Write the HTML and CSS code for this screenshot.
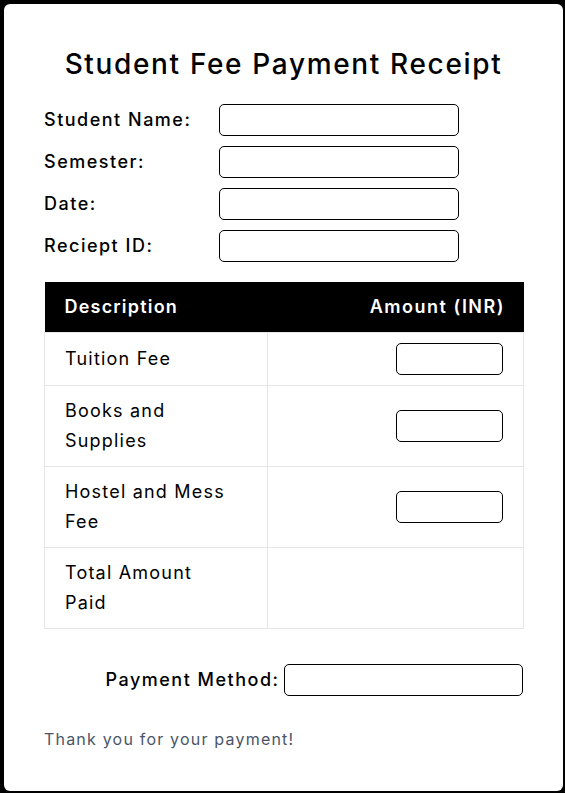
FILE: index.html
```html
<!DOCTYPE html>
<html lang="en">
<head>
<meta charset="utf-8">
<title>Student Fee Payment Receipt</title>
<link rel="stylesheet" href="styles.css">
</head>
<body>
<div class="receipt">
  <h1 class="title">Student Fee Payment Receipt</h1>
  <div class="fields">
    <label class="field-label">Student Name:</label>
    <input class="box field-input" type="text">
    <label class="field-label">Semester:</label>
    <input class="box field-input" type="text">
    <label class="field-label">Date:</label>
    <input class="box field-input" type="text">
    <label class="field-label">Reciept ID:</label>
    <input class="box field-input" type="text">
  </div>
  <table class="fees">
    <colgroup><col class="col-desc"><col class="col-amt"></colgroup>
    <thead>
      <tr><th class="th-desc">Description</th><th class="th-amt"><span class="th-amt-text">Amount (INR)</span></th></tr>
    </thead>
    <tbody>
      <tr><td class="desc">Tuition Fee</td><td class="amt"><input class="box amt-input" type="text"></td></tr>
      <tr><td class="desc">Books and Supplies</td><td class="amt"><input class="box amt-input" type="text"></td></tr>
      <tr><td class="desc">Hostel and Mess Fee</td><td class="amt"><input class="box amt-input" type="text"></td></tr>
      <tr><td class="desc">Total Amount Paid</td><td class="amt"></td></tr>
    </tbody>
  </table>
  <div class="payment">
    <label class="pay-label">Payment Method:</label>
    <input class="box pay-input" type="text">
  </div>
  <p class="thanks">Thank you for your payment!</p>
</div>
</body>
</html>
```

FILE: styles.css
```css
html, body {
  margin: 0;
  background: #000;
}
body {
  padding: 4px 2px 2px 4px;
  font-family: Inter, "Open Sans", sans-serif;
  color: #000;
}
.receipt {
  box-sizing: border-box;
  width: 559px;
  height: 787px;
  background: #fff;
  border-radius: 6px;
  padding: 40px;
}
.title {
  margin: 0 0 20px;
  font-size: 28px;
  line-height: 40px;
  font-weight: 500;
  letter-spacing: 1.65px;
  text-align: center;
}
.fields {
  display: grid;
  grid-template-columns: 175px 240px;
  row-gap: 10px;
  align-items: center;
  margin-bottom: 20px;
}
.field-label, .pay-label {
  font-size: 18px;
  font-weight: 500;
  line-height: 24px;
  letter-spacing: 1.5px;
}
.pay-label { margin-right: -1.5px; }
.box {
  box-sizing: border-box;
  border: 1px solid #000;
  border-radius: 5px;
  height: 32px;
  margin: 0;
  padding: 0 6px;
  background: #fff;
  font: inherit;
}
.field-input { width: 240px; }
.fees {
  width: 480px;
  border-collapse: collapse;
  table-layout: fixed;
  font-size: 18px;
  line-height: 30px;
  letter-spacing: 1.2px;
}
.col-desc { width: 223px; }
.fees th {
  background: #000;
  color: #fff;
  font-weight: 600;
  height: 50px;
  padding: 0 20px;
}
.th-desc { text-align: left; letter-spacing: 1.2px; }
.th-amt { text-align: right; }
.th-amt-text { letter-spacing: 1.5px; margin-right: -1.5px; }
.fees td {
  border: 1px solid #e6e6e6;
  padding: 10px 20px;
  vertical-align: middle;
}
.fees td.desc { padding-right: 36px; }
.amt { text-align: right; }
.amt-input { width: 107px; vertical-align: middle; }
.payment {
  display: flex;
  justify-content: flex-end;
  align-items: center;
  gap: 6px;
  margin-top: 35px;
}
.pay-input { width: 239px; }
.thanks {
  margin: 31px 0 0;
  font-size: 16px;
  line-height: 24px;
  letter-spacing: 1.2px;
  color: #4a5568;
}
```
